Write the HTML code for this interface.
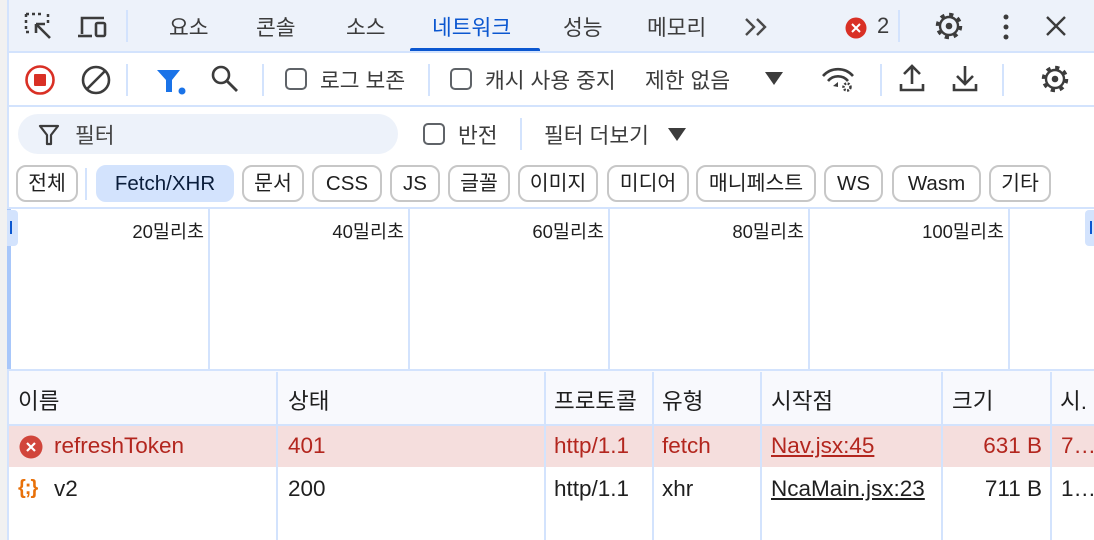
<!DOCTYPE html>
<html><head><meta charset="utf-8"><style>
*{box-sizing:border-box;margin:0;padding:0}
body{width:1094px;height:540px;overflow:hidden;background:#fff;font-family:"Liberation Sans","Noto Sans CJK KR",sans-serif;color:#1f1f1f;position:relative}
.a{position:absolute;white-space:nowrap}
.t{font-size:21.5px;color:#3c3c3c;top:11px}
.tb{font-size:21.5px;color:#3c3c3c;top:64px}
.vs{position:absolute;width:2px;background:#d3e3fd}
.hl{position:absolute;left:7px;right:0;height:2px;background:#d3e3fd}
.chip{position:absolute;top:165px;height:37px;border:2px solid #c7c7c7;border-radius:10px;font-size:20.5px;line-height:33px;text-align:center;white-space:nowrap;color:#1f1f1f;background:#fff}
.cb{position:absolute;width:22px;height:22px;border:2px solid #5f6368;border-radius:5px}
.col{position:absolute;top:372px;bottom:0;width:2px;background:#d3e3fd}
.cell{position:absolute;font-size:22.5px;white-space:nowrap}
.ms{position:absolute;top:218px;font-size:18.5px;white-space:nowrap}
svg{position:absolute}
</style></head><body>
<div class="a" style="left:0;top:0;width:7px;height:540px;background:#f1f1f1"></div>
<div class="a" style="left:7px;top:0;width:2px;height:540px;background:#d3e3fd"></div>
<!-- tab bar -->
<div class="a" style="left:9px;top:0;right:0;height:52px;background:#edf2fa"></div>
<svg style="left:24px;top:12px" width="30" height="30" viewBox="0 0 30 30"><path d="M2 2h16M2 2v18M2 20h6" stroke="#3c3c3c" stroke-width="2.5" stroke-dasharray="3 3" fill="none"/><path d="M24 2v10" stroke="#3c3c3c" stroke-width="2.5" stroke-dasharray="3 3"/><path d="M12 12l14 14M12 12h9M12 12v9" stroke="#3c3c3c" stroke-width="2.6" fill="none"/></svg>
<svg style="left:76px;top:14px" width="34" height="26" viewBox="0 0 34 26"><path d="M6 20V4h22" stroke="#3c3c3c" stroke-width="2.6" fill="none"/><path d="M2 22h14" stroke="#3c3c3c" stroke-width="2.6"/><rect x="20" y="9" width="9" height="13" rx="1.5" stroke="#3c3c3c" stroke-width="2.6" fill="none"/></svg>
<div class="vs" style="left:126px;top:10px;height:32px"></div>
<div class="a t" style="left:169px">요소</div>
<div class="a t" style="left:256px">콘솔</div>
<div class="a t" style="left:346px">소스</div>
<div class="a t" style="left:432px;color:#0b57d0">네트워크</div>
<div class="a" style="left:410px;top:48px;width:130px;height:4px;background:#0b57d0;border-radius:2px 2px 0 0"></div>
<div class="a t" style="left:563px">성능</div>
<div class="a t" style="left:647px">메모리</div>
<svg style="left:740px;top:16px" width="36" height="22" viewBox="0 0 36 22"><path d="M6 3l8 8-8 8M17 3l8 8-8 8" stroke="#4a4a4a" stroke-width="2.4" fill="none"/></svg>
<svg style="left:845px;top:17px" width="22" height="22" viewBox="0 0 22 22"><circle cx="11" cy="11" r="10.5" fill="#d93025"/><path d="M7 7l8 8M15 7l-8 8" stroke="#fff" stroke-width="2"/></svg>
<div class="a" style="left:877px;top:13px;font-size:22px;color:#3c3c3c">2</div>
<div class="vs" style="left:898px;top:10px;height:32px"></div>
<svg style="left:933px;top:10px" width="32" height="32" viewBox="0 0 32 32"><circle cx="16" cy="16" r="9" stroke="#3c3c3c" stroke-width="2.4" fill="none"/><circle cx="16" cy="16" r="11.5" stroke="#3c3c3c" stroke-width="3.5" fill="none" stroke-dasharray="4.2 4.8"/><circle cx="16" cy="16" r="3.3" fill="#3c3c3c"/></svg>
<svg style="left:998px;top:12px" width="16" height="30" viewBox="0 0 16 30"><circle cx="8" cy="5" r="2.5" fill="#3c3c3c"/><circle cx="8" cy="15" r="2.5" fill="#3c3c3c"/><circle cx="8" cy="25" r="2.5" fill="#3c3c3c"/></svg>
<svg style="left:1045px;top:15px" width="22" height="22" viewBox="0 0 22 22"><path d="M2 2l18 18M20 2L2 20" stroke="#3c3c3c" stroke-width="2.4"/></svg>
<div class="hl" style="top:51px"></div>
<!-- toolbar -->
<svg style="left:24px;top:64px" width="32" height="32" viewBox="0 0 32 32"><circle cx="16" cy="16" r="13.5" stroke="#d93025" stroke-width="2.6" fill="none"/><rect x="10" y="10" width="12" height="12" rx="1" fill="#d93025"/></svg>
<svg style="left:80px;top:64px" width="32" height="32" viewBox="0 0 32 32"><circle cx="16" cy="16" r="13" stroke="#3c3c3c" stroke-width="2.6" fill="none"/><path d="M7 25L25 7" stroke="#3c3c3c" stroke-width="2.6"/></svg>
<div class="vs" style="left:126px;top:64px;height:32px"></div>
<svg style="left:157px;top:68px" width="30" height="28" viewBox="0 0 30 28"><path d="M0 2h23l-8 10v12h-6V12z" fill="#1a73e8"/><circle cx="25" cy="23" r="3.5" fill="#1a73e8"/></svg>
<svg style="left:210px;top:64px" width="30" height="30" viewBox="0 0 30 30"><circle cx="11" cy="11" r="8" stroke="#3c3c3c" stroke-width="2.6" fill="none"/><path d="M17 17l10 10" stroke="#3c3c3c" stroke-width="2.8"/></svg>
<div class="vs" style="left:262px;top:64px;height:32px"></div>
<div class="cb" style="left:285px;top:68px"></div>
<div class="a tb" style="left:320px">로그 보존</div>
<div class="vs" style="left:428px;top:64px;height:32px"></div>
<div class="cb" style="left:450px;top:68px"></div>
<div class="a tb" style="left:485px">캐시 사용 중지</div>
<div class="a tb" style="left:645px">제한 없음</div>
<svg style="left:765px;top:72px" width="18" height="14" viewBox="0 0 18 14"><path d="M0 0h18L9 13z" fill="#3c3c3c"/></svg>
<svg style="left:820px;top:62px" width="36" height="32" viewBox="0 0 36 32"><path d="M3 14a20 20 0 0130 0M8 19a13 13 0 0120 0" stroke="#3c3c3c" stroke-width="2.6" fill="none"/><path d="M13 24l5-4v5z" fill="#3c3c3c"/><circle cx="27" cy="25" r="3.5" stroke="#3c3c3c" stroke-width="2.5" fill="none" stroke-dasharray="2 1.4"/></svg>
<div class="vs" style="left:880px;top:64px;height:32px"></div>
<svg style="left:899px;top:64px" width="26" height="28" viewBox="0 0 26 28"><path d="M13 20V3M5 10l8-8 8 8M2 20v6h22v-6" stroke="#3c3c3c" stroke-width="2.6" fill="none"/></svg>
<svg style="left:952px;top:64px" width="26" height="28" viewBox="0 0 26 28"><path d="M13 2v17M5 12l8 8 8-8M2 20v6h22v-6" stroke="#3c3c3c" stroke-width="2.6" fill="none"/></svg>
<div class="vs" style="left:1002px;top:64px;height:32px"></div>
<svg style="left:1039px;top:63px" width="32" height="32" viewBox="0 0 32 32"><circle cx="16" cy="16" r="9" stroke="#3c3c3c" stroke-width="2.4" fill="none"/><circle cx="16" cy="16" r="11.5" stroke="#3c3c3c" stroke-width="3.5" fill="none" stroke-dasharray="4.2 4.8"/><circle cx="16" cy="16" r="3.3" fill="#3c3c3c"/></svg>
<div class="hl" style="top:105px"></div>
<!-- filter -->
<div class="a" style="left:18px;top:114px;width:380px;height:40px;background:#edf2fa;border-radius:20px"></div>
<svg style="left:38px;top:124px" width="22" height="22" viewBox="0 0 22 22"><path d="M2 2h18l-7 9v9h-4v-9z" stroke="#3c3c3c" stroke-width="2.2" fill="none" stroke-linejoin="round"/></svg>
<div class="a" style="left:75px;top:119px;font-size:21.5px;color:#444">필터</div>
<div class="cb" style="left:423px;top:123px"></div>
<div class="a" style="left:458px;top:119px;font-size:21.5px;color:#3c3c3c">반전</div>
<div class="vs" style="left:520px;top:118px;height:32px"></div>
<div class="a" style="left:544px;top:119px;font-size:21.5px;color:#3c3c3c">필터 더보기</div>
<svg style="left:668px;top:128px" width="18" height="14" viewBox="0 0 18 14"><path d="M0 0h18L9 13z" fill="#3c3c3c"/></svg>
<!-- chips -->
<div class="chip" style="left:16px;width:62px">전체</div>
<div class="vs" style="left:85px;top:168px;height:32px"></div>
<div class="chip" style="left:96px;width:138px;background:#d3e3fd;border-color:#d3e3fd;color:#0a1d3b">Fetch/XHR</div>
<div class="chip" style="left:242px;width:62px">문서</div>
<div class="chip" style="left:312px;width:70px">CSS</div>
<div class="chip" style="left:390px;width:50px">JS</div>
<div class="chip" style="left:448px;width:62px">글꼴</div>
<div class="chip" style="left:518px;width:80px">이미지</div>
<div class="chip" style="left:607px;width:82px">미디어</div>
<div class="chip" style="left:696px;width:120px">매니페스트</div>
<div class="chip" style="left:824px;width:59px">WS</div>
<div class="chip" style="left:892px;width:89px">Wasm</div>
<div class="chip" style="left:989px;width:62px">기타</div>
<div class="hl" style="top:207px"></div>
<!-- overview -->
<div class="a" style="left:7px;top:209px;width:4px;height:161px;background:#a8c7fa"></div>
<div class="a" style="left:7px;top:210px;width:11px;height:36px;background:#d3e3fd;border-radius:0 4px 4px 0"></div>
<div class="a" style="left:10px;top:221px;width:2px;height:13px;background:#0b57d0"></div>
<div class="a" style="left:1085px;top:210px;width:9px;height:36px;background:#d3e3fd;border-radius:4px 0 0 4px"></div>
<div class="a" style="left:1090px;top:221px;width:2px;height:13px;background:#0b57d0"></div>
<div class="vs" style="left:208px;top:209px;height:161px"></div>
<div class="vs" style="left:408px;top:209px;height:161px"></div>
<div class="vs" style="left:608px;top:209px;height:161px"></div>
<div class="vs" style="left:808px;top:209px;height:161px"></div>
<div class="vs" style="left:1008px;top:209px;height:161px"></div>
<div class="ms" style="right:890px">20밀리초</div>
<div class="ms" style="right:690px">40밀리초</div>
<div class="ms" style="right:490px">60밀리초</div>
<div class="ms" style="right:290px">80밀리초</div>
<div class="ms" style="right:90px">100밀리초</div>
<div class="hl" style="top:369px"></div>
<!-- table -->
<div class="a" style="left:9px;top:371px;right:0;height:53px;background:#f8f9fd"></div>
<div class="hl" style="top:424px"></div>
<div class="a" style="left:9px;top:426px;right:0;height:41px;background:#f5dedd"></div>
<div class="col" style="left:276px"></div>
<div class="col" style="left:544px"></div>
<div class="col" style="left:652px"></div>
<div class="col" style="left:760px"></div>
<div class="col" style="left:941px"></div>
<div class="col" style="left:1050px"></div>
<div class="cell" style="left:18px;top:384px">이름</div>
<div class="cell" style="left:288px;top:384px">상태</div>
<div class="cell" style="left:554px;top:384px">프로토콜</div>
<div class="cell" style="left:662px;top:384px">유형</div>
<div class="cell" style="left:771px;top:384px">시작점</div>
<div class="cell" style="left:952px;top:384px">크기</div>
<div class="cell" style="left:1060px;top:384px">시.</div>
<svg style="left:19px;top:435px" width="24" height="24" viewBox="0 0 24 24"><circle cx="12" cy="12" r="11.5" fill="#d1453b"/><path d="M8 8l8 8M16 8l-8 8" stroke="#fff" stroke-width="2.2"/></svg>
<div class="cell" style="left:54px;top:433px;color:#b3261e">refreshToken</div>
<div class="cell" style="left:288px;top:433px;color:#b3261e">401</div>
<div class="cell" style="left:554px;top:433px;color:#b3261e">http/1.1</div>
<div class="cell" style="left:662px;top:433px;color:#b3261e">fetch</div>
<div class="cell" style="left:771px;top:433px;color:#b3261e;text-decoration:underline">Nav.jsx:45</div>
<div class="cell" style="right:52px;top:433px;color:#b3261e">631 B</div>
<div class="cell" style="left:1061px;top:433px;color:#b3261e">7…</div>
<div class="cell" style="left:18px;top:477px;color:#e8710a;font-size:20px;font-weight:bold;letter-spacing:-1px">{;}</div>
<div class="cell" style="left:54px;top:476px">v2</div>
<div class="cell" style="left:288px;top:476px">200</div>
<div class="cell" style="left:554px;top:476px">http/1.1</div>
<div class="cell" style="left:662px;top:476px">xhr</div>
<div class="cell" style="left:771px;top:476px;width:170px;overflow:hidden;text-decoration:underline">NcaMain.jsx:23</div>
<div class="cell" style="right:52px;top:476px">711 B</div>
<div class="cell" style="left:1061px;top:476px">1…</div>
</body></html>
